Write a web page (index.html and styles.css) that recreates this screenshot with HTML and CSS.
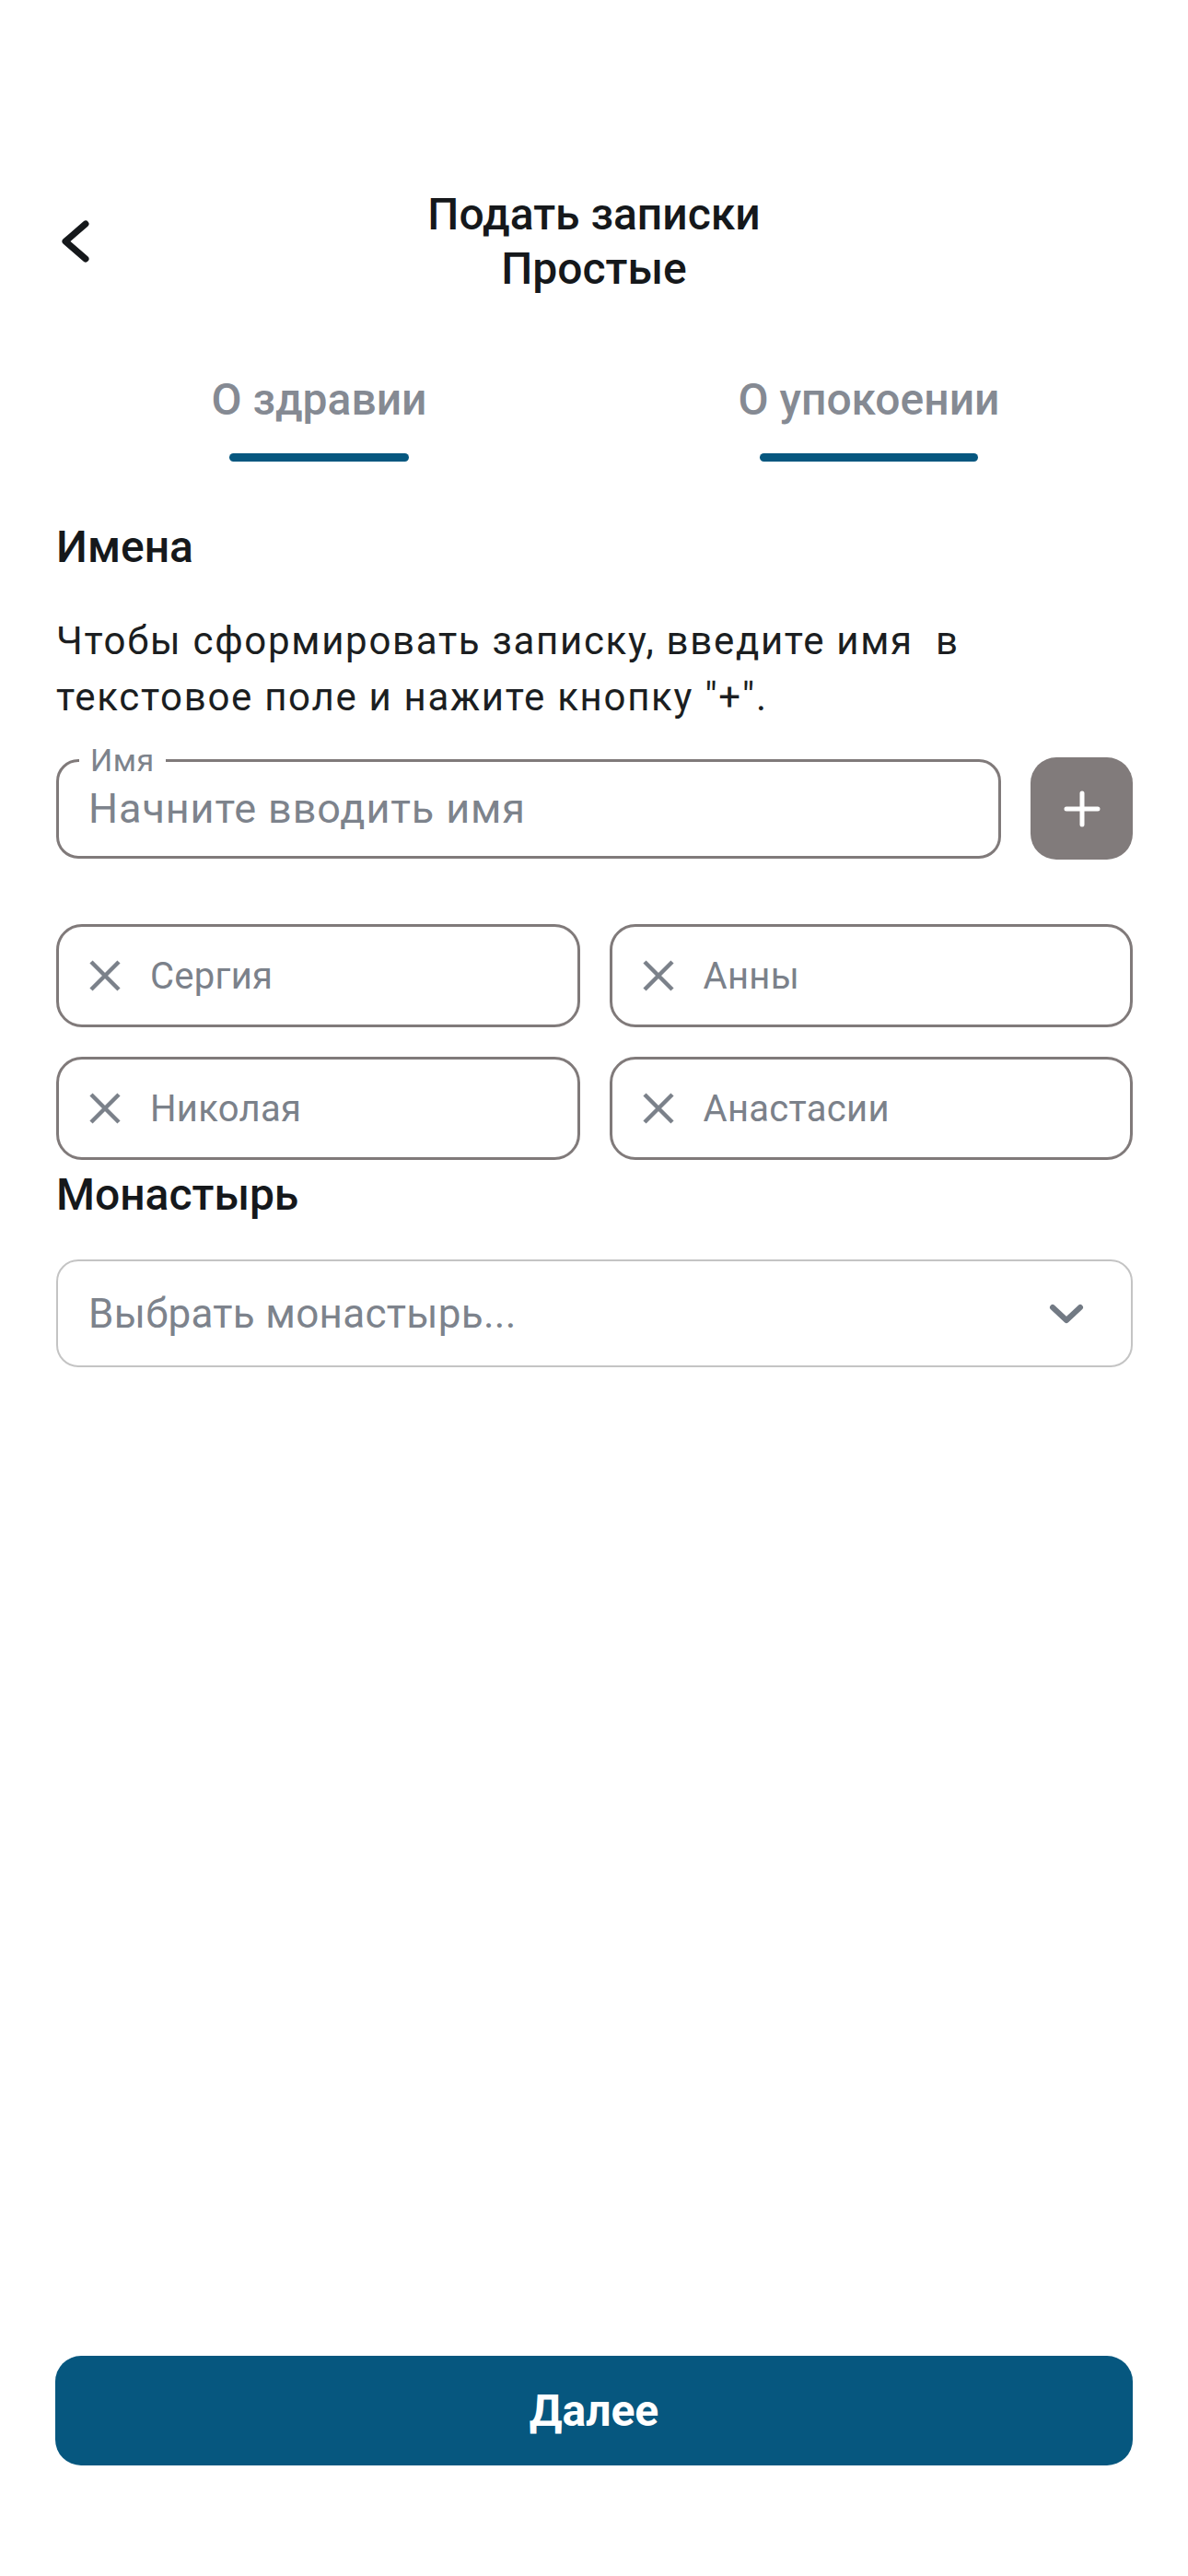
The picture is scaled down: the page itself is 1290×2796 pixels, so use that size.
FILE: index.html
```html
<!DOCTYPE html>
<html lang="ru">
<head>
<meta charset="utf-8">
<title>Подать записки</title>
<link rel="stylesheet" href="styles.css">
</head>
<body>
<div class="page">
  <header class="header">
    <button class="back" aria-label="Назад">
      <svg class="back-icon" viewBox="0 0 36 52" width="36" height="52">
        <path d="M29 7 L7 26 L29 45" fill="none" stroke="#15181b" stroke-width="7" stroke-linecap="round" stroke-linejoin="round"/>
      </svg>
    </button>
    <h1 class="title">Подать записки<br>Простые</h1>
    <div class="header-spacer"></div>
  </header>

  <nav class="tabs">
    <div class="tab"><span class="tab-label">О здравии<span class="tab-indicator"></span></span></div>
    <div class="tab"><span class="tab-label">О упокоении<span class="tab-indicator"></span></span></div>
  </nav>

  <main class="content">
    <h2 class="section-title">Имена</h2>
    <p class="hint">Чтобы сформировать записку, введите имя&nbsp; в текстовое поле и нажите кнопку "+".</p>

    <div class="name-row">
      <label class="name-field">
        <span class="name-label">Имя</span>
        <input class="name-input" type="text" placeholder="Начните вводить имя">
      </label>
      <button class="add-btn" aria-label="Добавить">
        <svg viewBox="0 0 40 40" width="40" height="40">
          <path d="M20 3 V37 M3 20 H37" fill="none" stroke="#ffffff" stroke-width="5" stroke-linecap="round"/>
        </svg>
      </button>
    </div>

    <div class="chips">
      <div class="chip">
        <svg class="chip-x" viewBox="0 0 36 36" width="36" height="36"><path d="M3 3 L33 33 M33 3 L3 33" fill="none" stroke="#7b818a" stroke-width="4.5"/></svg>
        <span>Сергия</span>
      </div>
      <div class="chip">
        <svg class="chip-x" viewBox="0 0 36 36" width="36" height="36"><path d="M3 3 L33 33 M33 3 L3 33" fill="none" stroke="#7b818a" stroke-width="4.5"/></svg>
        <span>Анны</span>
      </div>
      <div class="chip">
        <svg class="chip-x" viewBox="0 0 36 36" width="36" height="36"><path d="M3 3 L33 33 M33 3 L3 33" fill="none" stroke="#7b818a" stroke-width="4.5"/></svg>
        <span>Николая</span>
      </div>
      <div class="chip">
        <svg class="chip-x" viewBox="0 0 36 36" width="36" height="36"><path d="M3 3 L33 33 M33 3 L3 33" fill="none" stroke="#7b818a" stroke-width="4.5"/></svg>
        <span>Анастасии</span>
      </div>
    </div>

    <h2 class="section-title monastery-title">Монастырь</h2>
    <div class="select">
      <span>Выбрать монастырь...</span>
      <svg class="select-chevron" viewBox="0 0 40 24" width="40" height="24">
        <path d="M5 5 L20 19 L35 5" fill="none" stroke="#727a84" stroke-width="6" stroke-linecap="round" stroke-linejoin="round"/>
      </svg>
    </div>
  </main>

  <button class="next-btn">Далее</button>
</div>
</body>
</html>
```

FILE: styles.css
```css
html, body {
  margin: 0;
  padding: 0;
  background: #ffffff;
}

body {
  font-family: Roboto, "Noto Sans", "Liberation Sans", sans-serif;
  color: #15181b;
}

.page {
  width: 1290px;
  min-height: 2796px;
  box-sizing: border-box;
  display: flex;
  flex-direction: column;
  padding-bottom: 120px;
}

.header {
  display: grid;
  grid-template-columns: 1fr auto 1fr;
  align-items: center;
  padding-top: 203px;
}

.back {
  justify-self: start;
  margin-left: 64px;
  width: 36px;
  height: 52px;
  padding: 0;
  border: none;
  background: none;
  display: flex;
}

.title {
  margin: 0;
  font-size: 48px;
  font-weight: 500;
  line-height: 59px;
  text-align: center;
  color: #15181b;
}

.tabs {
  display: flex;
  margin: 85px 48px 0;
}

.tab {
  flex: 1;
  display: flex;
  justify-content: center;
}

.tab-label {
  display: inline-flex;
  flex-direction: column;
  align-items: center;
  font-size: 48px;
  font-weight: 500;
  line-height: 56px;
  color: #858a93;
}

.tab-indicator {
  width: 83.5%;
  height: 9px;
  margin-top: 30px;
  border-radius: 5px;
  background: #06577f;
}

.content {
  padding: 0 60px 0 61px;
}

.section-title {
  margin: 65px 0 0;
  font-size: 48px;
  font-weight: 500;
  line-height: 56px;
  color: #15181b;
}

.hint {
  margin: 43px 0 0;
  font-size: 42px;
  line-height: 61px;
  letter-spacing: 1.7px;
  color: #1b1e21;
}

.name-row {
  display: flex;
  align-items: center;
  gap: 32px;
  margin-top: 35px;
}

.name-field {
  position: relative;
  flex: 1;
  height: 108px;
  box-sizing: border-box;
  border: 3px solid #807a7a;
  border-radius: 24px;
  display: flex;
  align-items: center;
  padding: 0 32px;
}

.name-label {
  position: absolute;
  left: 22px;
  top: -20px;
  padding: 0 12px;
  background: #ffffff;
  font-size: 34px;
  line-height: 36px;
  letter-spacing: 0.5px;
  color: #7d838c;
}

.name-input {
  width: 100%;
  padding: 0;
  border: none;
  outline: none;
  background: transparent;
  font-family: inherit;
  font-size: 45px;
  letter-spacing: 0.9px;
  color: #1b1e21;
}

.name-input::placeholder {
  color: #7d838c;
  opacity: 1;
}

.add-btn {
  flex: none;
  width: 111px;
  height: 111px;
  padding: 0;
  border: none;
  border-radius: 28px;
  background: #817b7b;
  display: flex;
  align-items: center;
  justify-content: center;
}

.chips {
  display: grid;
  grid-template-columns: 1fr 1fr;
  gap: 32px;
  margin-top: 70px;
}

.chip {
  height: 112px;
  box-sizing: border-box;
  border: 3px solid #807a7a;
  border-radius: 28px;
  display: flex;
  align-items: center;
  gap: 31px;
  padding-left: 32px;
  font-size: 40px;
  letter-spacing: 0.3px;
  color: #7b818a;
}

.chip-x {
  flex: none;
}

.monastery-title {
  margin-top: 10px;
}

.select {
  margin-top: 42px;
  height: 117px;
  box-sizing: border-box;
  border: 2px solid #c4c4c4;
  border-radius: 24px;
  display: flex;
  align-items: center;
  justify-content: space-between;
  padding: 0 50px 0 33px;
  font-size: 44px;
  letter-spacing: 0.3px;
  color: #7d838c;
}

.next-btn {
  margin: auto 60px 0 60px;
  height: 119px;
  border: none;
  border-radius: 28px;
  background: #06577f;
  color: #ffffff;
  font-family: inherit;
  font-size: 48px;
  font-weight: 700;
}
```
